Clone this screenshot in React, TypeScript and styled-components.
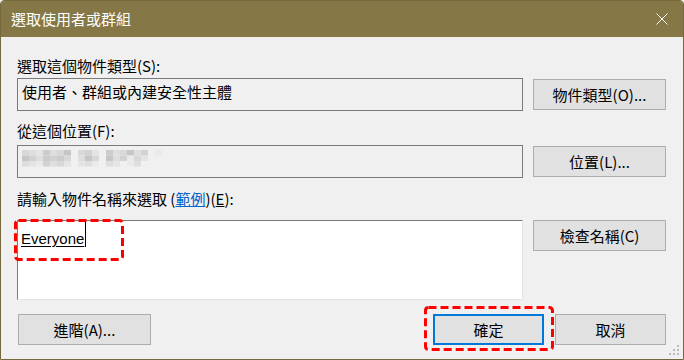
import React from 'react';
import styled, { createGlobalStyle } from 'styled-components';

const GlobalStyle = createGlobalStyle`
  html, body {
    margin: 0;
    padding: 0;
    background: #ffffff;
  }
  body {
    font-family: "Noto Sans CJK TC", "Microsoft JhengHei", sans-serif;
  }
`;

const Window = styled.div`
  position: relative;
  box-sizing: border-box;
  width: 684px;
  height: 360px;
  border: 1px solid #76683d;
  border-radius: 4px 4px 0 0;
  background: #f0f0f0;
  display: flex;
  flex-direction: column;
  overflow: hidden;
`;

const TitleBar = styled.div`
  height: 36px;
  flex-shrink: 0;
  background: #857746;
  display: flex;
  align-items: center;
  justify-content: space-between;
  padding: 0 15px 0 10px;
  color: #ffffff;
  font-size: 15px;
  line-height: 20px;
`;

const Body = styled.div`
  display: flex;
  flex-direction: column;
  padding: 0 17px 0 16px;
`;

const Row = styled.div<{ $mt: number; $align?: string }>`
  margin-top: ${p => p.$mt}px;
  display: grid;
  grid-template-columns: 506px 133px;
  column-gap: 10px;
  align-items: ${p => p.$align || 'center'};
`;

const Label = styled.div<{ $mt: number }>`
  margin-top: ${p => p.$mt}px;
  font-size: 15px;
  line-height: 20px;
  color: #000;
  white-space: nowrap;
`;

const Link = styled.span`
  color: #0066cc;
  text-decoration: underline;
`;

const Mnemonic = styled.span`
  text-decoration: underline;
`;

const ReadOnlyBox = styled.div`
  box-sizing: border-box;
  height: 33px;
  border: 1px solid #7a7a7a;
  background: #f0f0f0;
  padding: 3px 4px 0 4px;
  font-size: 15px;
  line-height: 20px;
  color: #000;
  white-space: nowrap;
`;

const Button = styled.button<{ $w?: number; $default?: boolean }>`
  box-sizing: border-box;
  width: ${p => (p.$w ? `${p.$w}px` : '100%')};
  height: 31px;
  margin: 0;
  padding: 0;
  background: #e1e1e1;
  border: ${p => (p.$default ? '2px solid #0078d7' : '1px solid #adadad')};
  font-family: "Noto Sans CJK TC", "Microsoft JhengHei", sans-serif;
  font-size: 15px;
  line-height: 20px;
  color: #000;
  cursor: default;
`;

const NameArea = styled.div`
  position: relative;
  box-sizing: border-box;
  height: 80px;
  background: #ffffff;
  border: 1px solid;
  border-color: #7a7a7a #e3e3e3 #e3e3e3 #7a7a7a;
  padding: 1px 0 0 3px;
`;

const EntryLine = styled.div`
  height: 25px;
  display: flex;
  align-items: flex-end;
`;

const NameText = styled.span`
  font-family: "Liberation Sans", Arial, sans-serif;
  font-size: 15px;
  line-height: 17px;
  color: #000;
  text-decoration: underline;
  text-underline-offset: 2px;
`;

const Caret = styled.span`
  width: 1px;
  height: 25px;
  margin-left: 1px;
  background: #000;
`;

const BottomRow = styled.div`
  margin-top: 14px;
  display: flex;
  justify-content: space-between;
  padding-left: 1px;
`;

const ButtonGroup = styled.div`
  display: flex;
  gap: 11px;
`;

const Highlight = styled.span`
  position: relative;
  display: block;
`;

const DashedMark = styled.svg<{ $l: number; $t: number }>`
  position: absolute;
  left: ${p => p.$l}px;
  top: ${p => p.$t}px;
  pointer-events: none;
  overflow: visible;
`;

const Grip = styled.svg`
  position: absolute;
  right: 2px;
  bottom: 2px;
`;

const Mosaic = styled.svg`
  display: block;
  margin-top: 1px;
`;

const Dashed = ({ l, t, w, h }: { l: number; t: number; w: number; h: number }) => (
  <DashedMark $l={l} $t={t} width={w} height={h}>
    <rect
      x={1.5}
      y={1.5}
      width={w - 3}
      height={h - 3}
      rx={3}
      fill="none"
      stroke="#ff0000"
      strokeWidth={3}
      strokeDasharray="8 4"
    />
  </DashedMark>
);

// blurred-out location name, drawn as grey mosaic cells (one string per row)
const mosaicRows = [
  'bcd9cb8fbadf9cb8cafe',
  '8ac9a9bfc8bf8caebdff',
  'cdeacbdfdcefcdfecfff',
];

const shadeOf = (ch: string) => {
  const v = parseInt(ch, 16);
  const g = Math.round(150 + v * 6);
  return `rgb(${g},${g},${g})`;
};

const LocationMosaic = () => (
  <Mosaic width={140} height={17}>
    {mosaicRows.map((row, r) =>
      row.split('').map((ch, i) => (
        <rect key={`${r}-${i}`} x={i * 7} y={r * 5.5} width={7} height={5.5} fill={shadeOf(ch)} />
      ))
    )}
  </Mosaic>
);

export default function App() {
  return (
    <>
      <GlobalStyle />
      <Window>
        <TitleBar>
          <span>選取使用者或群組</span>
          <svg width="12" height="12" viewBox="0 0 12 12">
            <path d="M0.5 0.5 L11.5 11.5 M11.5 0.5 L0.5 11.5" stroke="#ffffff" strokeWidth="1" />
          </svg>
        </TitleBar>
        <Body>
          <Label $mt={19}>選取這個物件類型(S):</Label>
          <Row $mt={2}>
            <ReadOnlyBox>使用者、群組或內建安全性主體</ReadOnlyBox>
            <Button>物件類型(O)...</Button>
          </Row>
          <Label $mt={10}>從這個位置(F):</Label>
          <Row $mt={4}>
            <ReadOnlyBox>
              <LocationMosaic />
            </ReadOnlyBox>
            <Button>位置(L)...</Button>
          </Row>
          <Label $mt={11}>
            請輸入物件名稱來選取 (<Link>範例</Link>)(<Mnemonic>E</Mnemonic>):
          </Label>
          <Row $mt={11} $align="start">
            <NameArea>
              <EntryLine>
                <NameText>Everyone</NameText>
                <Caret />
              </EntryLine>
              <Dashed l={-4} t={-2} w={110} h={42} />
            </NameArea>
            <Button>檢查名稱(C)</Button>
          </Row>
          <BottomRow>
            <Button $w={133}>進階(A)...</Button>
            <ButtonGroup>
              <Highlight>
                <Button $w={111} $default>確定</Button>
                <Dashed l={-9} t={-8} w={130} h={45} />
              </Highlight>
              <Button $w={111}>取消</Button>
            </ButtonGroup>
          </BottomRow>
        </Body>
        <Grip width="12" height="12" viewBox="0 0 12 12">
          <rect x="8" y="0" width="2" height="2" fill="#bcbcbc" />
          <rect x="4" y="4" width="2" height="2" fill="#bcbcbc" />
          <rect x="8" y="4" width="2" height="2" fill="#bcbcbc" />
          <rect x="0" y="8" width="2" height="2" fill="#bcbcbc" />
          <rect x="4" y="8" width="2" height="2" fill="#bcbcbc" />
          <rect x="8" y="8" width="2" height="2" fill="#bcbcbc" />
        </Grip>
      </Window>
    </>
  );
}
